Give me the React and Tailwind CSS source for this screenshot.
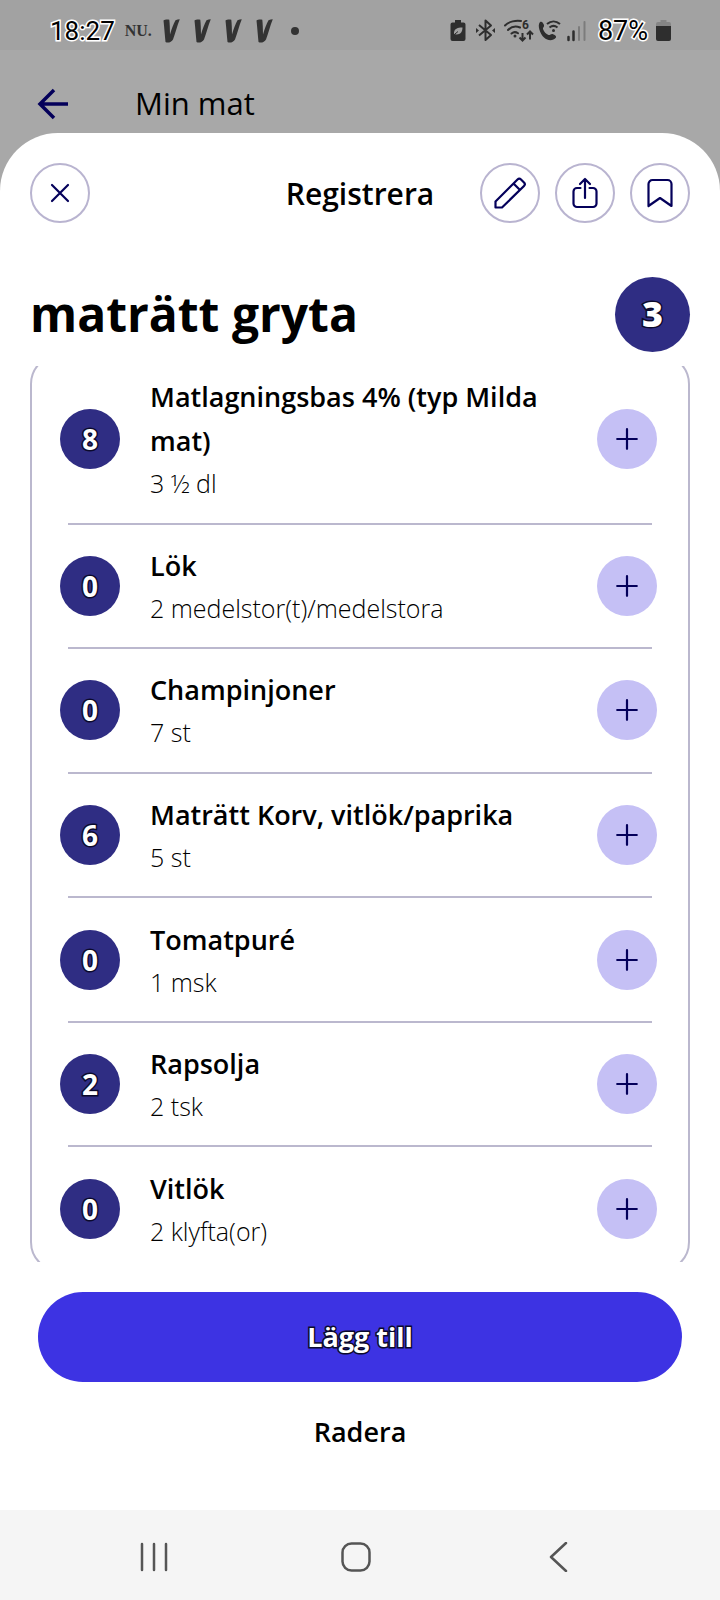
import React from 'react';

const ingredients = [
    { points: 8, name: 'Matlagningsbas 4% (typ Milda mat)', amount: '3 ½ dl' },
    { points: 0, name: 'Lök', amount: '2 medelstor(t)/medelstora' },
    { points: 0, name: 'Champinjoner', amount: '7 st' },
    { points: 6, name: 'Maträtt Korv, vitlök/paprika', amount: '5 st' },
    { points: 0, name: 'Tomatpuré', amount: '1 msk' },
    { points: 2, name: 'Rapsolja', amount: '2 tsk' },
    { points: 0, name: 'Vitlök', amount: '2 klyfta(or)' },
];

// Brush mark used by the news app notifications
function BrushMark() {
    return (
        <svg width="17" height="24" viewBox="0 0 17 24" fill="#333" aria-hidden="true">
            <path d="M.5 1.500C2 .3 4.500 .2 6.300 .8 6.800 5 6.900 10 7 15.500 8.500 10 10.500 5 12.500 1.200 14 .6 15.300 .3 16.800 .3 14 7 12.500 14 10 20.500 8.500 23.500 4.500 24.300 2.500 23 1.800 16 1.200 8 .5 1.500Z" />
        </svg>
    );
}

function StatusIcons() {
    return (
        <svg width="136" height="24" viewBox="0 0 136 24" fill="none" stroke="#2e2e2e" strokeWidth="2" aria-hidden="true">
            {/* battery saver */}
            <path d="M5 1h6v2.500h2.500a2 2 0 0 1 2 2V20a2 2 0 0 1-2 2h-11a2 2 0 0 1-2-2V5.500a2 2 0 0 1 2-2H5Z" fill="#2e2e2e" stroke="none" />
            <path d="M12.500 8.500C7 8.500 3.500 10 4 15c5 1.500 8.500-1 8.500-6.500Z" fill="#a2a2a2" stroke="none" />
            <path d="M2.500 17 8 12.500" stroke="#2e2e2e" strokeWidth="1" />
            {/* bluetooth */}
            <path d="m29 6 12 10-5.500 5V1.500L41 6.500 29 16.500" strokeWidth="2" strokeLinejoin="round" />
            <path d="m26 9 3 2.500-3 2.500ZM45 9l-3 2.500 3 2.500Z" fill="#2e2e2e" stroke="none" />
            {/* wifi */}
            <path d="M55 6.500C59 2.500 66 1 71 2M58 11c3.500-3.500 8-4.200 12-2.500M61.500 14.500c2-1.700 4.500-1.700 6.500-.2" strokeLinecap="round" />
            <circle cx="65" cy="17" r="1.500" fill="#2e2e2e" stroke="none" />
            <path d="M72.500 14v7m-3-2.500 3 3 3-3M80 20.500v-8m-3 3 3-3 3 3" strokeWidth="2" />
            <text x="72" y="10" fontSize="12" fontWeight="700" fontFamily="Roboto, sans-serif" fill="#2e2e2e" stroke="none">6</text>
            {/* wifi calling */}
            <path d="M90 3c2-1 3 .5 4 3 .6 2-1.500 2.500-1 4 1 3 3 5 5.500 6 1.500.5 2.500-1.500 4-1 2.500 1 4 2 3.500 3.500C103 22 98 22 94 18.500 90 15 87 6 90 3Z" fill="#2e2e2e" stroke="none" />
            <path d="M97 5c4-3.500 9-3.500 13 0M99.500 8.500c2.500-2 5.500-2 8 0" />
            <circle cx="103.500" cy="11.500" r="1.500" fill="#2e2e2e" stroke="none" />
            {/* signal */}
            <path d="M118.500 18v3M123.500 12.500V21" strokeWidth="2.500" strokeLinecap="round" />
            <path d="M129 8v13M134.500 3v18" stroke="#7c7c7c" strokeWidth="2" strokeLinecap="round" />
        </svg>
    );
}

function RoundButton({ label, children }) {
    return (
        <button
            type="button"
            aria-label={label}
            className="flex size-[60px] shrink-0 items-center justify-center rounded-full border-2 border-[#b9b4d0] text-[#04005a]"
        >
            <svg width="32" height="32" viewBox="0 0 32 32" fill="none" stroke="currentColor" strokeWidth="2.200" strokeLinecap="round" strokeLinejoin="round">
                {children}
            </svg>
        </button>
    );
}

function IngredientRow({ points, name, amount, last }) {
    return (
        <li className="flex grow flex-col">
            <div className="flex grow items-center pr-[31px] pl-7">
                <span className="flex size-[60px] shrink-0 items-center justify-center rounded-full bg-[#2f2d83] text-[28px] font-bold text-white [-webkit-text-stroke:3px_#0b0a2c] [paint-order:stroke_fill]">
                    {points}
                </span>
                <div className="min-w-0 flex-1 py-[18px] pr-8 pl-[30px]">
                    <p className="text-[27px] leading-[44px] font-semibold">{name}</p>
                    <p className="text-[25px] leading-[40px] font-light">{amount}</p>
                </div>
                <button
                    type="button"
                    aria-label={`Lägg till ${name}`}
                    className="flex size-[60px] shrink-0 items-center justify-center rounded-full bg-[#c5c0f5] text-[#04005a]"
                >
                    <svg width="22" height="22" viewBox="0 0 22 22" fill="none" stroke="currentColor" strokeWidth="2.200" strokeLinecap="round">
                        <path d="M1.200 11h19.600M11 1.200v19.600" />
                    </svg>
                </button>
            </div>
            {!last && <div className="mr-9 ml-9 h-[2px] bg-[#bbb8ce]" />}
        </li>
    );
}

function App() {
    return (
        <div className="flex min-h-screen flex-col bg-[#a8a8a8] font-['Open_Sans',sans-serif] text-black">
            <div className="flex h-[50px] items-center bg-[#a2a2a2] pt-3 pr-[49px] pl-[50px] font-['Roboto',sans-serif]">
                <span className="text-[26px] [-webkit-text-stroke:3px_#fff] [paint-order:stroke_fill]">18:27</span>
                <span className="ml-[10px] font-['Liberation_Serif',serif] text-base font-bold text-[#333]">NU.</span>
                <div className="ml-[11px] flex gap-[14px]">
                    <BrushMark />
                    <BrushMark />
                    <BrushMark />
                    <BrushMark />
                </div>
                <span className="ml-[18px] size-2 rounded-full bg-[#333]" />
                <div className="ml-auto flex items-center gap-2">
                    <StatusIcons />
                    <span className="ml-1 text-[27px] [-webkit-text-stroke:3px_#fff] [paint-order:stroke_fill]">87%</span>
                    <svg width="15" height="22" viewBox="0 0 15 22" aria-hidden="true">
                        <path d="M4.500 0h6v2H13a2 2 0 0 1 2 2v3H0V4a2 2 0 0 1 2-2h2.500Z" fill="#858585" />
                        <path d="M0 6h15v13a2 2 0 0 1-2 2H2a2 2 0 0 1-2-2Z" fill="#2e2e2e" />
                    </svg>
                </div>
            </div>

            <header className="flex h-[83px] items-center pt-6 pl-[37px]">
                <button type="button" aria-label="Tillbaka" className="text-[#04005a]">
                    <svg width="32" height="32" viewBox="0 0 32 32" fill="none" stroke="currentColor" strokeWidth="3.500">
                        <path d="M31 16H3M17 2 3 16l14 14" />
                    </svg>
                </button>
                <span className="ml-[66px] text-[31px]">Min mat</span>
            </header>

            <main className="flex grow flex-col rounded-t-[58px] bg-white px-[30px] pt-[30px]">
                <div className="grid grid-cols-[1fr_auto_1fr] items-center">
                    <RoundButton label="Stäng">
                        <path d="m8 8 16 16M24 8 8 24" />
                    </RoundButton>
                    <h2 className="text-[30px] font-semibold">Registrera</h2>
                    <div className="flex justify-end gap-[15px]">
                        <RoundButton label="Redigera">
                            <path d="M1.500 30.500v-6L23.500 2.500a2.500 2.500 0 0 1 3.500 0l3 3a2.500 2.500 0 0 1 0 3.500L8 30.500ZM19.500 6.500l6 6" />
                        </RoundButton>
                        <RoundButton label="Dela">
                            <path d="M11.500 11H8a3.500 3.500 0 0 0-3.500 3.500v12A3.500 3.500 0 0 0 8 30h16a3.500 3.500 0 0 0 3.500-3.500v-12A3.500 3.500 0 0 0 24 11h-3.500M16 21V2M11 7l5-5 5 5" />
                        </RoundButton>
                        <RoundButton label="Spara">
                            <path d="M4.500 29V7A4 4 0 0 1 8.500 3h15a4 4 0 0 1 4 4v22L16 21Z" />
                        </RoundButton>
                    </div>
                </div>

                <div className="mt-[52px] flex items-center justify-between">
                    <h1 className="text-[48px] leading-[78px] font-bold">maträtt gryta</h1>
                    <span className="flex size-[75px] shrink-0 items-center justify-center rounded-full bg-[#2f2d83] text-4xl font-extrabold text-white [-webkit-text-stroke:3px_#0b0a2c] [paint-order:stroke_fill]">
                        3
                    </span>
                </div>

                {/* the list edges run just past the visible area, as in a scrolled view */}
                <section className="mt-[13px] flex grow flex-col overflow-hidden">
                    <ul className="-mt-3 -mb-[10px] flex grow flex-col rounded-[30px] border-2 border-[#bbb8ce]">
                        {ingredients.map((item, index) => (
                            <IngredientRow key={item.name} {...item} last={index === ingredients.length - 1} />
                        ))}
                    </ul>
                </section>

                <div className="flex flex-col px-2 pt-[30px] pb-[53px]">
                    <button
                        type="button"
                        className="h-[90px] rounded-full bg-[#3d33e3] text-[27px] font-bold text-white [-webkit-text-stroke:3px_#0b0a2c] [paint-order:stroke_fill]"
                    >
                        Lägg till
                    </button>
                    <button type="button" className="mt-[25px] h-[50px] text-[27px] font-semibold">
                        Radera
                    </button>
                </div>
            </main>

            <nav className="flex h-[90px] items-center bg-[#f5f5f5] pt-1 pr-[61px] pl-[53px] text-[#555]">
                <button type="button" aria-label="Senaste appar" className="flex flex-1 justify-center">
                    <svg width="30" height="30" viewBox="0 0 30 30" fill="none" stroke="currentColor" strokeWidth="2.500" strokeLinecap="round">
                        <path d="M3 2v26M15 2v26M27 2v26" />
                    </svg>
                </button>
                <button type="button" aria-label="Hem" className="flex flex-1 justify-center">
                    <svg width="30" height="30" viewBox="0 0 30 30" fill="none" stroke="currentColor" strokeWidth="2.500">
                        <rect x="1.500" y="1.500" width="27" height="27" rx="9" />
                    </svg>
                </button>
                <button type="button" aria-label="Bakåt" className="flex flex-1 justify-center">
                    <svg width="30" height="30" viewBox="0 0 30 30" fill="none" stroke="currentColor" strokeWidth="2.500" strokeLinecap="round" strokeLinejoin="round">
                        <path d="M23 1 8 15l15 14" />
                    </svg>
                </button>
            </nav>
        </div>
    );
}

export default App;
